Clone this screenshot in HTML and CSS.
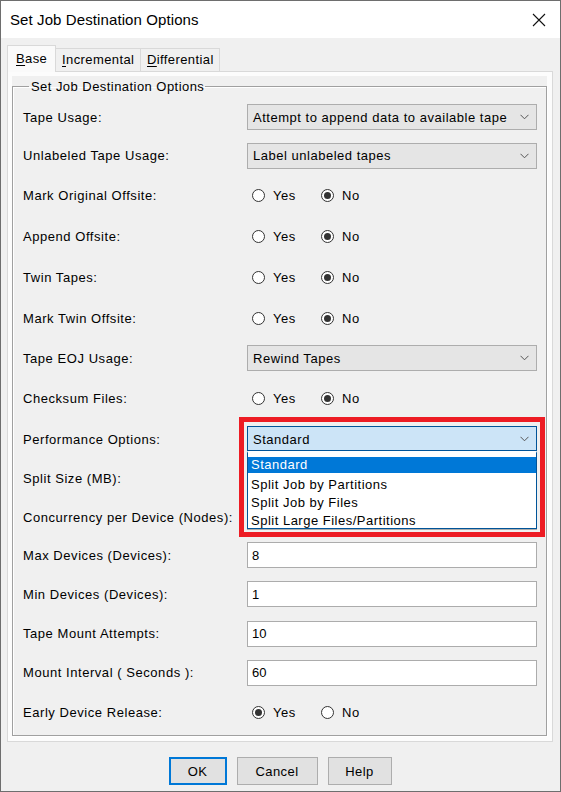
FILE: index.html
```html
<!DOCTYPE html>
<html>
<head>
<meta charset="utf-8">
<link rel="stylesheet" href="styles.css">
</head>
<body>
<div class="window">
  <div class="titlebar">
    <span class="title">Set Job Destination Options</span>
    <svg class="close" width="14" height="14" viewBox="0 0 14 14"><path d="M1 1 L13 13 M13 1 L1 13" stroke="#111" stroke-width="1.1" fill="none"/></svg>
  </div>
  <div class="body">
    <div class="tabs">
      <div class="tab active"><u>B</u>ase</div>
      <div class="tab"><u>I</u>ncremental</div>
      <div class="tab"><u>D</u>ifferential</div>
    </div>
    <div class="panel">
      <div class="inner">
        <fieldset class="group">
          <legend>Set Job Destination Options</legend>
          <div class="grid">
            <div class="lbl">Tape Usage:</div>
            <div class="ctl"><div class="combo"><span>Attempt to append data to available tape</span><svg class="chev" width="9" height="6" viewBox="0 0 9 6"><path d="M0.5 0.8 L4.5 4.8 L8.5 0.8" stroke="#555" fill="none"/></svg></div></div>

            <div class="lbl">Unlabeled Tape Usage:</div>
            <div class="ctl"><div class="combo"><span>Label unlabeled tapes</span><svg class="chev" width="9" height="6" viewBox="0 0 9 6"><path d="M0.5 0.8 L4.5 4.8 L8.5 0.8" stroke="#555" fill="none"/></svg></div></div>

            <div class="lbl">Mark Original Offsite:</div>
            <div class="ctl radios"><span class="opt"><i class="radio"></i>Yes</span><span class="opt"><i class="radio on"></i>No</span></div>

            <div class="lbl">Append Offsite:</div>
            <div class="ctl radios"><span class="opt"><i class="radio"></i>Yes</span><span class="opt"><i class="radio on"></i>No</span></div>

            <div class="lbl">Twin Tapes:</div>
            <div class="ctl radios"><span class="opt"><i class="radio"></i>Yes</span><span class="opt"><i class="radio on"></i>No</span></div>

            <div class="lbl">Mark Twin Offsite:</div>
            <div class="ctl radios"><span class="opt"><i class="radio"></i>Yes</span><span class="opt"><i class="radio on"></i>No</span></div>

            <div class="lbl">Tape EOJ Usage:</div>
            <div class="ctl"><div class="combo"><span>Rewind Tapes</span><svg class="chev" width="9" height="6" viewBox="0 0 9 6"><path d="M0.5 0.8 L4.5 4.8 L8.5 0.8" stroke="#555" fill="none"/></svg></div></div>

            <div class="lbl">Checksum Files:</div>
            <div class="ctl radios"><span class="opt"><i class="radio"></i>Yes</span><span class="opt"><i class="radio on"></i>No</span></div>

            <div class="lbl">Performance Options:</div>
            <div class="ctl perf">
              <div class="combo focus"><span>Standard</span><svg class="chev" width="9" height="6" viewBox="0 0 9 6"><path d="M0.5 0.8 L4.5 4.8 L8.5 0.8" stroke="#555" fill="none"/></svg></div>
              <div class="highlight"></div>
              <div class="dropdown">
                <div class="item sel">Standard</div>
                <div class="item">Split Job by Partitions</div>
                <div class="item">Split Job by Files</div>
                <div class="item">Split Large Files/Partitions</div>
              </div>
            </div>

            <div class="lbl">Split Size (MB):</div>
            <div class="ctl"><div class="field"></div></div>

            <div class="lbl">Concurrency per Device (Nodes):</div>
            <div class="ctl"><div class="field"></div></div>

            <div class="lbl">Max Devices (Devices):</div>
            <div class="ctl"><div class="field">8</div></div>

            <div class="lbl">Min Devices (Devices):</div>
            <div class="ctl"><div class="field">1</div></div>

            <div class="lbl">Tape Mount Attempts:</div>
            <div class="ctl"><div class="field">10</div></div>

            <div class="lbl">Mount Interval ( Seconds ):</div>
            <div class="ctl"><div class="field">60</div></div>

            <div class="lbl">Early Device Release:</div>
            <div class="ctl radios"><span class="opt"><i class="radio on"></i>Yes</span><span class="opt"><i class="radio"></i>No</span></div>
          </div>
        </fieldset>
      </div>
    </div>
    <div class="buttons">
      <div class="btn default">OK</div>
      <div class="btn cancel">Cancel</div>
      <div class="btn help">Help</div>
    </div>
  </div>
</div>
</body>
</html>
```

FILE: styles.css
```css
* { box-sizing: border-box; }
html, body { margin: 0; padding: 0; }
body {
  font-family: "Liberation Sans", Arial, sans-serif;
  font-size: 13px;
  color: #000;
  background: #f0f0f0;
}
.window {
  width: 561px;
  height: 792px;
  border: 1px solid #6e6e6e;
  background: #f0f0f0;
  display: flex;
  flex-direction: column;
}
.titlebar {
  height: 37px;
  background: #fff;
  display: flex;
  align-items: center;
  justify-content: space-between;
  padding: 0 14px 0 9px;
  flex: none;
}
.title {
  font-size: 15px;
  color: #000;
  letter-spacing: 0.1px;
}
.close { display: block; }
.body {
  flex: 1;
  display: flex;
  flex-direction: column;
  padding: 7px 7px 0 6px;
}
.tabs {
  display: flex;
  align-items: flex-end;
  height: 26px;
  position: relative;
  z-index: 2;
}
.tab {
  height: 23px;
  border: 1px solid #d9d9d9;
  border-bottom: none;
  background: #f0f0f0;
  padding: 3px 5px 0 6px;
  letter-spacing: 0.4px;
  margin-left: -1px;
}
.tab u { text-decoration-thickness: 1px; text-underline-offset: 2px; }
.tab.active {
  height: 27px;
  margin-left: 0;
  background: #fafafa;
  padding: 5px 8px 0 8px;
  margin-bottom: -1px;
  width: 49px;
}
.tab:nth-child(2) { width: 86px; }
.tab:nth-child(3) { width: 80px; }
.panel {
  border: 1px solid #d9d9d9;
  background: #fcfcfc;
  padding: 4px 5px 5px 4px;
  height: 671px;
  flex: none;
}
.inner {
  background: #f0f0f0;
  height: 100%;
  padding-top: 3px;
}
.group {
  margin: 0;
  padding: 0 0 0 10px;
  border: 1px solid #a0a0a0;
  box-shadow: inset 1px 1px 0 #fff, 1px 1px 0 #fff;
  height: 657px;
  min-width: 0;
}
.group legend {
  padding: 0 1px 0 2px;
  margin-left: 6px;
  letter-spacing: 0.45px;
  line-height: 15px;
}
.grid {
  display: grid;
  grid-template-columns: 224px 290px;
  grid-template-rows: 38px 39px 41px 41px 41px 40px 40px 41px 40px 39px 38px 38px 40px 39px 39px 40px;
  margin-top: 4px;
}
.lbl {
  display: flex;
  align-items: center;
  letter-spacing: 0.55px;
  white-space: nowrap;
}
.ctl {
  display: flex;
  align-items: center;
  position: relative;
}
.combo {
  width: 290px;
  height: 26px;
  background: #e5e5e5;
  border: 1px solid #adadad;
  display: flex;
  align-items: center;
  justify-content: space-between;
  padding: 0 7px 0 5px;
  letter-spacing: 0.52px;
  white-space: nowrap;
}
.combo.focus {
  background: #cce4f7;
  border-color: #005499;
}
.chev { display: block; flex: none; }
.field {
  width: 290px;
  height: 26px;
  background: #fff;
  border: 1px solid #acacac;
  display: flex;
  align-items: center;
  padding: 0 4px;
}
.radios { gap: 0; padding-left: 5px; }
.opt {
  display: inline-flex;
  align-items: center;
  letter-spacing: 0.5px;
  width: 69px;
}
.radio {
  display: inline-block;
  width: 13px;
  height: 13px;
  border: 1px solid #333;
  border-radius: 50%;
  background: #fff;
  margin-right: 8px;
  position: relative;
}
.radio.on::after {
  content: "";
  position: absolute;
  left: 2px;
  top: 2px;
  width: 7px;
  height: 7px;
  border-radius: 50%;
  background: #333;
}
.perf { z-index: 3; }
.highlight {
  position: absolute;
  left: -8px;
  top: -2px;
  width: 306px;
  height: 120px;
  border: 5px solid #ed1c24;
  pointer-events: none;
}
.dropdown {
  position: absolute;
  left: 0;
  top: 32px;
  width: 290px;
  height: 78px;
  background: #fff;
  border: 1px solid #005499;
  border-top: 2px solid #fff;
  padding-top: 4px;
  box-shadow: 0 -1px 0 #005499;
}
.item {
  height: 18px;
  line-height: 18px;
  padding-left: 3px;
  letter-spacing: 0.5px;
  white-space: nowrap;
}
.item.sel {
  background: #0078d7;
  color: #fff;
  height: 16px;
  line-height: 16px;
  margin-bottom: 3px;
}
.buttons {
  display: flex;
  justify-content: center;
  gap: 10px;
  padding-top: 15px;
}
.btn {
  height: 28px;
  background: #e1e1e1;
  border: 1px solid #adadad;
  display: flex;
  align-items: center;
  justify-content: center;
  letter-spacing: 0.4px;
}
.btn.default { width: 58px; border: 2px solid #0078d7; }
.btn.cancel { width: 81px; }
.btn.help { width: 64px; }
```
